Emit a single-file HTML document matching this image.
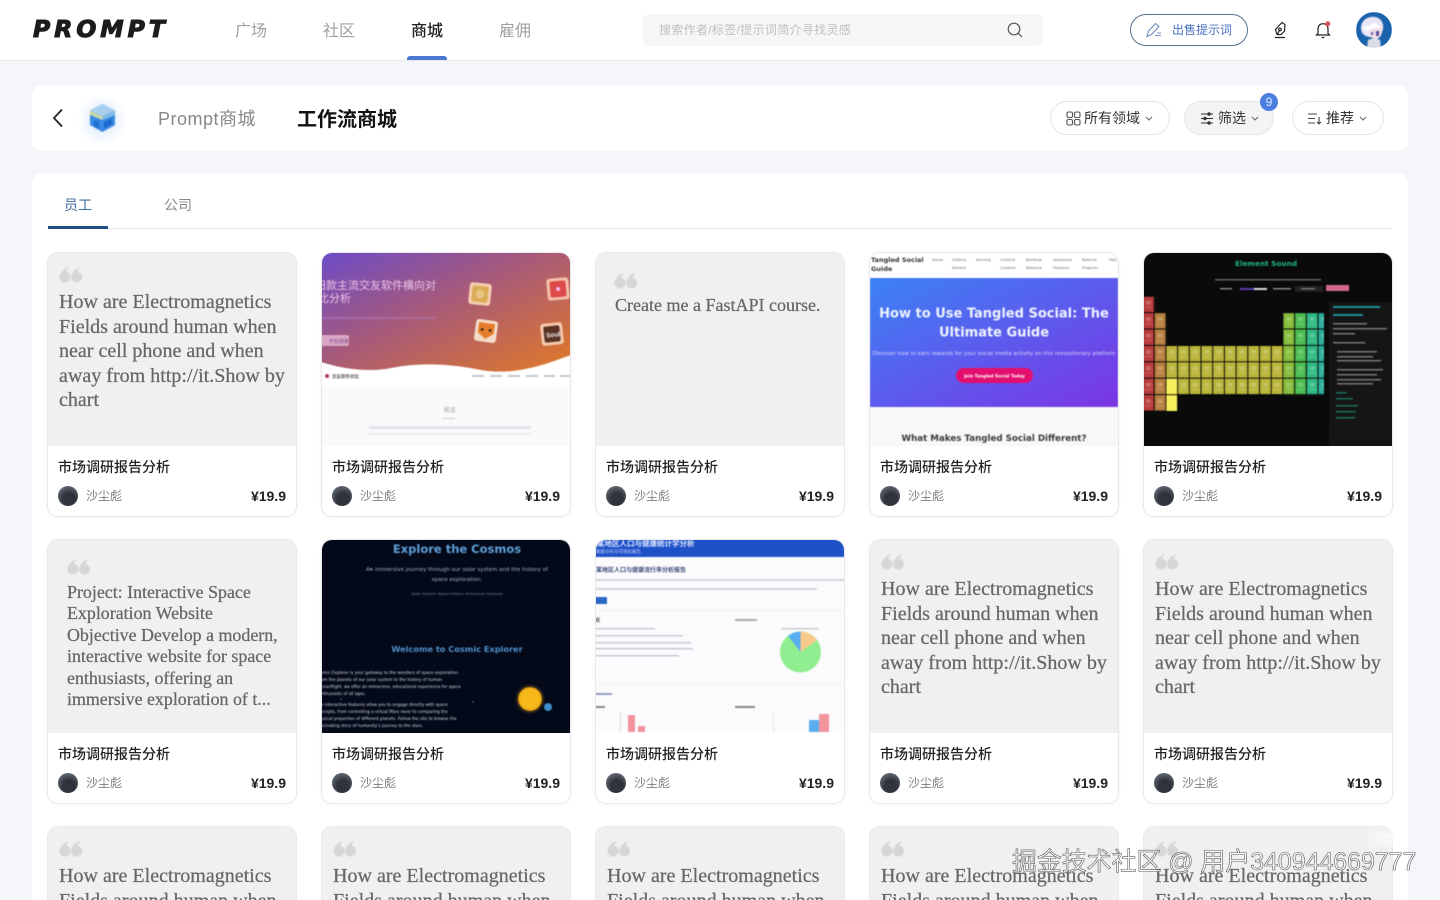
<!DOCTYPE html>
<html lang="zh"><head><meta charset="utf-8"><title>Prompt商城</title>
<style>
*{box-sizing:border-box;margin:0;padding:0}
html,body{width:1440px;height:900px;overflow:hidden;background:#f5f6fa;font-family:"Liberation Sans","Noto Sans CJK SC",sans-serif}
#root{position:relative;width:1440px;height:900px;overflow:hidden;background:#f5f6fa}
.a{position:absolute;white-space:nowrap}
#hd{position:absolute;left:0;top:0;width:1440px;height:61px;background:#fff;border-bottom:1px solid #e9e9ec}
.nav{top:20.500px;font-size:16px;line-height:22px;color:#a0a0a0}
.panel{position:absolute;left:32px;width:1376px;background:#fff;border-radius:10px}
.pill{position:absolute;top:101px;height:34px;border:1px solid #e3e4e8;border-radius:17px;background:#fff;font-size:14px;line-height:33px;color:#333;white-space:nowrap}
.card{position:absolute;width:250px;height:265px;background:#fff;border:1px solid #e9e9ec;border-radius:11px;overflow:hidden;box-shadow:0 1px 3px rgba(0,0,0,.05)}
.r3{height:74px;border-bottom:0;border-radius:11px 11px 0 0;box-shadow:none}
.th{position:absolute;left:-1px;top:-1px;width:250px;height:194px;background:#f0f0f1;overflow:hidden}
.r3 .th{height:75px}
.th svg{position:absolute;left:0;top:0;filter:blur(.5px)}
.q{position:absolute;font-family:"Liberation Serif","Noto Serif CJK SC",serif;color:#676767;-webkit-text-stroke:.25px #676767}
.t{position:absolute;left:10px;top:203.500px;font-size:14px;line-height:20px;font-weight:500;color:#222;white-space:nowrap}
.av{position:absolute;left:10px;top:233px;width:20px;height:20px;border-radius:50%;background:radial-gradient(circle at 55% 65%,#2f333b 0 35%,#5a606c 70%)}
.n{position:absolute;left:38px;top:234px;font-size:12px;line-height:18px;color:#7d7d7d}
.p{position:absolute;right:10px;top:234px;font-size:14px;line-height:18px;font-weight:700;color:#222}
.e{left:12px;top:38px;font-size:20.050px;line-height:24.600px;width:236px}
.r3 .e{height:37px;overflow:hidden}
#wm{left:1012px;top:846px;font-size:24.900px;line-height:32px;color:rgba(255,255,255,.75);-webkit-text-stroke:.6px #5a5a5a}
</style></head><body><div id="root">

<div id="hd"></div>
<div class="a" style="left:33px;top:14px;font-family:'DejaVu Sans',sans-serif;font-size:23.500px;line-height:30px;font-weight:700;font-style:italic;letter-spacing:4px;color:#1c1c1c;-webkit-text-stroke:1.100px #1c1c1c">PROMPT</div>
<div class="a nav" style="left:235px">广场</div>
<div class="a nav" style="left:323px">社区</div>
<div class="a nav" style="left:411px;color:#222;font-weight:500">商城</div>
<div class="a nav" style="left:499px">雇佣</div>
<div class="a" style="left:407px;top:56px;width:40px;height:4px;background:#4a78d0;border-radius:3px 3px 0 0"></div>

<div class="a" style="left:643px;top:14px;width:400px;height:32px;background:#f6f6f7;border-radius:6px"></div>
<div class="a" style="left:659px;top:21px;font-size:12px;line-height:18px;letter-spacing:.32px;color:#c0c0c0">搜索作者/标签/提示词简介寻找灵感</div>
<svg class="a" style="left:1006px;top:21px" width="18" height="18" viewBox="0 0 18 18" fill="none" stroke="#555" stroke-width="1.200"><circle cx="8" cy="8" r="5.800"/><path d="M12.300 12.300L16 16"/></svg>

<div class="a" style="left:1130px;top:14px;width:118px;height:32px;border:1px solid #54708c;border-radius:16px"></div>
<svg class="a" style="left:1145px;top:21px" width="18" height="18" viewBox="0 0 18 18" fill="none" stroke="#6f8fc4" stroke-width="1.100"><path d="M2 15.500L3.500 10 10.500 2.500 14 5.500 6.500 13.500Z"/><path d="M10 14.500h6M12 12h4"/></svg>
<div class="a" style="left:1172px;top:21px;font-size:12px;line-height:18px;color:#4a6fc0">出售提示词</div>
<svg class="a" style="left:1271px;top:20px" width="18" height="20" viewBox="0 0 18 20" fill="none" stroke="#222" stroke-width="1.200"><path d="M6 14.500L4.500 9.500 11 2.500l3 2-.5 6.500-3.500 3.500Z"/><circle cx="9" cy="9.500" r="1.300"/><path d="M8 11l-1.500 3M4 17.500h10"/></svg>
<svg class="a" style="left:1314px;top:20px" width="18" height="20" viewBox="0 0 18 20" fill="none" stroke="#222" stroke-width="1.200"><path d="M4 13.500V9C4 5.800 6 3.700 9 3.700s5 2.100 5 5.300v4.500l1.500 1.500H2.500Z"/><path d="M7.500 17.500h3"/><circle cx="13.700" cy="3.800" r="2.600" fill="#dc4f5e" stroke="none"/></svg>
<svg class="a" style="left:1356px;top:12px" width="36" height="36" viewBox="0 0 36 36"><defs><clipPath id="avc"><circle cx="18" cy="18" r="18"/></clipPath></defs><g clip-path="url(#avc)" style="filter:blur(.4px)"><rect width="36" height="36" fill="#1c63ad"/><path d="M5 16C5 8 12 4 19 5c6 1 9 6 8 12-1 4-2 6-3 8H13C8 24 5 21 5 16Z" fill="#e9e6f6"/><path d="M13 17c2-3 9-4 13-2 1 5-1 10-5 12-4 1-7-2-8-6Z" fill="#f3dfe8"/><path d="M6 14c5 1 9 0 13-4 2 3 5 5 8 6-5-1-11 0-15 3-3-1-5-3-6-5Z" fill="#fff"/><path d="M12 28c3-2 9-2 12 0l1 8H11Z" fill="#dadce8"/><path d="M20 19h3v5h-3Z" fill="#5a4f9a"/><path d="M15 20l2 0v3h-2Z" fill="#6a5aa8"/></g></svg>

<div class="panel" style="top:85px;height:66px"></div>
<svg class="a" style="left:50px;top:107px" width="16" height="22" viewBox="0 0 16 22" fill="none" stroke="#222" stroke-width="1.800"><path d="M12 2.500L4 11l8 8.500"/></svg>
<div class="a" style="left:78px;top:94px;width:48px;height:50px;background:radial-gradient(circle at 50% 52%,rgba(110,170,240,.3),rgba(110,170,240,0) 70%)"></div>
<svg class="a" style="left:89px;top:103px;filter:blur(.5px)" width="27" height="30" viewBox="0 0 27 30"><path d="M13.500 1L26 7.500V22l-12.500 7L1 22V7.500Z" fill="#3a8ae4"/><path d="M13.500 1L26 7.500l-12.500 6L1 7.500Z" fill="#a8d0ee"/><path d="M1 7.500l12.500 6V17L1 12Z" fill="#c4d8a8"/><path d="M26 7.500l-12.500 6V17L26 12Z" fill="#7fbce8"/><path d="M5 17l5 2.200V26l-5-3Z" fill="#1f6fd0"/><path d="M15 19l8-3.500V21l-8 4.500Z" fill="#1a66cc"/></svg>
<div class="a" style="left:158px;top:107px;font-size:18px;line-height:25px;letter-spacing:.5px;color:#888">Prompt商城</div>
<div class="a" style="left:297px;top:106px;font-size:20px;line-height:28px;font-weight:700;color:#111">工作流商城</div>

<div class="pill" style="left:1050px;width:120px">
<svg class="a" style="left:15px;top:9px" width="15" height="15" viewBox="0 0 15 15" fill="none" stroke="#555" stroke-width="1.100"><rect x="1" y="1" width="5.500" height="5.500" rx="1.500"/><rect x="8.500" y="1" width="5.500" height="5.500" rx="1.500"/><rect x="1" y="8.500" width="5.500" height="5.500" rx="1.500"/><rect x="8.500" y="8.500" width="5.500" height="5.500" rx="1.500"/></svg>
<span class="a" style="left:33px;top:0">所有领域</span>
<svg class="a" style="left:94px;top:14px" width="8" height="6" viewBox="0 0 8 6" fill="none" stroke="#666" stroke-width="1"><path d="M1 1l3 3 3-3"/></svg></div>
<div class="pill" style="left:1184px;width:90px;background:#f3f4f6">
<svg class="a" style="left:15px;top:10px" width="14" height="13" viewBox="0 0 14 13" fill="none" stroke="#333" stroke-width="1.100"><path d="M1 2h12M1 6.500h12M1 11h12"/><circle cx="9" cy="2" r="1.200" fill="#333"/><circle cx="5" cy="6.500" r="1.200" fill="#333"/><circle cx="9" cy="11" r="1.200" fill="#333"/></svg>
<span class="a" style="left:33px;top:0">筛选</span>
<svg class="a" style="left:66px;top:14px" width="8" height="6" viewBox="0 0 8 6" fill="none" stroke="#666" stroke-width="1"><path d="M1 1l3 3 3-3"/></svg></div>
<div class="a" style="left:1260px;top:93px;width:18px;height:18px;border-radius:50%;background:#4a7fe0;color:#dfe8ff;font-size:12px;line-height:18px;text-align:center">9</div>
<div class="pill" style="left:1292px;width:92px">
<svg class="a" style="left:14px;top:10px" width="15" height="13" viewBox="0 0 15 13" fill="none" stroke="#444" stroke-width="1.100"><path d="M1 2h9M1 6.500h7M1 11h7M12 5v7M10 10l2 2 2-2"/></svg>
<span class="a" style="left:33px;top:0">推荐</span>
<svg class="a" style="left:66px;top:14px" width="8" height="6" viewBox="0 0 8 6" fill="none" stroke="#666" stroke-width="1"><path d="M1 1l3 3 3-3"/></svg></div>

<div class="panel" style="top:173px;height:727px;border-radius:10px 10px 0 0"></div>
<div class="a" style="left:64px;top:196px;font-size:14px;line-height:18px;color:#3f6c9c">员工</div>
<div class="a" style="left:164px;top:196px;font-size:14px;line-height:18px;color:#888">公司</div>
<div class="a" style="left:48px;top:228px;width:1344px;height:1px;background:#e8e8ea"></div>
<div class="a" style="left:48px;top:226px;width:60px;height:3px;background:#1f4f85"></div>

<!-- ROW 1 -->
<div class="card" style="left:47px;top:252px"><div class="th">
<svg width="24" height="18" viewBox="0 0 24 18" style="left:12px;top:14px"><g fill="#d6d6d7"><circle cx="6" cy="11" r="5.500"/><path d="M1 10C2 5 6 2 10 1 7 4 7 6 8 8Z"/><circle cx="17.500" cy="11" r="5.500"/><path d="M12.500 10c1-5 5-8 9-9-3 3-3 5-2 7Z"/></g></svg>
<div class="q e">How are Electromagnetics<br>Fields around human when<br>near cell phone and when<br>away from http://it.Show by<br>chart</div></div>
<div class="t">市场调研报告分析</div><div class="av"></div><div class="n">沙尘彪</div><div class="p">¥19.9</div></div>

<div class="card" style="left:321px;top:252px"><div class="th" style="background:#f9fafb">
<svg width="250" height="194" viewBox="0 0 250 194">
<defs><linearGradient id="g2" x1="0" y1="0" x2="1" y2="1"><stop offset="0" stop-color="#6c4cc8"/><stop offset=".45" stop-color="#a85a78"/><stop offset="1" stop-color="#e47b22"/></linearGradient></defs>
<rect width="250" height="125" fill="url(#g2)"/>
<path d="M0 110C25 118 50 120 70 116 100 110 130 112 160 118 195 124 225 112 250 103V135H0Z" fill="#fff"/>
<text x="-6" y="37" font-size="11" fill="#eec6e8">旧款主流交友软件横向对</text>
<text x="-3" y="50" font-size="11" fill="#eec6e8">比分析</text>
<rect x="0" y="65" width="115" height="2" fill="#b98ad0" opacity=".4"/>
<rect x="0" y="83" width="28" height="11" rx="2" fill="#e4b6d0" opacity=".85"/>
<text x="8" y="91" font-size="5" fill="#8a4a90">开始探索</text>
<g transform="rotate(6 159 42)"><rect x="148" y="31" width="22" height="22" rx="3" fill="#f4cdb2"/><rect x="151" y="34" width="16" height="16" rx="2" fill="#d9ab52"/><circle cx="159" cy="42" r="4.500" fill="#e7c484"/></g>
<g transform="rotate(-5 237 37)"><rect x="226" y="26" width="22" height="22" rx="3" fill="#f4bfa8"/><rect x="229" y="29" width="16" height="16" rx="2" fill="#dc4a4a"/><circle cx="237" cy="37" r="2" fill="#fbe"/></g>
<g transform="rotate(8 165 79)"><rect x="154" y="68" width="22" height="22" rx="3" fill="#f4dcc8"/><path d="M157 71h16v10l-8 6-8-6Z" fill="#e57c2a"/><circle cx="161" cy="78" r="1.300" fill="#222"/><circle cx="169" cy="78" r="1.300" fill="#222"/></g>
<g transform="rotate(-6 231 82)"><rect x="220" y="71" width="22" height="22" rx="3" fill="#f4c8ac"/><rect x="223" y="74" width="16" height="16" rx="2" fill="#5a3226"/><text x="225" y="85" font-size="6.500" font-weight="700" fill="#eee">Soul</text></g>
<circle cx="6" cy="124" r="2" fill="#b5344a"/><text x="11" y="126" font-size="4.500" fill="#555" font-weight="700">交友软件对比</text>
<g fill="#c4c6ca"><rect x="151" y="123" width="12" height="2"/><rect x="169" y="123" width="12" height="2"/><rect x="187" y="123" width="12" height="2"/><rect x="205" y="123" width="12" height="2"/><rect x="223" y="123" width="11" height="2"/><rect x="239" y="123" width="11" height="2"/></g>
<text x="123" y="160" font-size="6" fill="#999">前言</text><rect x="121" y="166" width="13" height="1" fill="#ccc"/>
<rect x="48" y="174" width="162" height="3" fill="#e2e4e7"/><rect x="48" y="181" width="162" height="2" fill="#e8e9ec"/>
</svg></div>
<div class="t">市场调研报告分析</div><div class="av"></div><div class="n">沙尘彪</div><div class="p">¥19.9</div></div>

<div class="card" style="left:595px;top:252px"><div class="th">
<svg width="24" height="18" viewBox="0 0 24 18" style="left:19px;top:20px"><g fill="#d6d6d7"><circle cx="6" cy="11" r="5.500"/><path d="M1 10C2 5 6 2 10 1 7 4 7 6 8 8Z"/><circle cx="17.500" cy="11" r="5.500"/><path d="M12.500 10c1-5 5-8 9-9-3 3-3 5-2 7Z"/></g></svg>
<div class="q" style="left:20px;top:42px;font-size:18px;line-height:22px;white-space:nowrap">Create me a FastAPI course.</div></div>
<div class="t">市场调研报告分析</div><div class="av"></div><div class="n">沙尘彪</div><div class="p">¥19.9</div></div>

<div class="card" style="left:869px;top:252px"><div class="th" style="background:#f8f8f9">
<svg width="250" height="194" viewBox="0 0 250 194" font-family="DejaVu Sans, sans-serif">
<defs><linearGradient id="g4" x1="0" y1="0" x2="1" y2="1"><stop offset="0" stop-color="#3b82f6"/><stop offset="1" stop-color="#7c35e4"/></linearGradient></defs>
<rect width="250" height="26" fill="#fff"/>
<text x="2" y="10" font-size="6.500" font-weight="700" fill="#333">Tangled Social</text><text x="2" y="19" font-size="6.500" font-weight="700" fill="#333">Guide</text>
<g font-size="3.800" fill="#666"><text x="63" y="9">Home</text><text x="83" y="9">Getting</text><text x="83" y="17">Started</text><text x="107" y="9">Earning</text><text x="131" y="9">Content</text><text x="131" y="17">Creation</text><text x="157" y="9">Building</text><text x="157" y="17">Network</text><text x="184" y="9">Advanced</text><text x="184" y="17">Features</text><text x="213" y="9">Referral</text><text x="213" y="17">Program</text><text x="240" y="9">FAQ</text></g>
<rect x="1" y="26" width="248" height="129" fill="url(#g4)"/>
<text x="125" y="65.500" text-anchor="middle" font-size="13" font-weight="700" fill="#eef3ff">How to Use Tangled Social: The</text>
<text x="125" y="84.500" text-anchor="middle" font-size="13" font-weight="700" fill="#eef3ff">Ultimate Guide</text>
<text x="125" y="103" text-anchor="middle" font-size="5.400" fill="#d8d8ff">Discover how to earn rewards for your social media activity on this revolutionary platform</text>
<rect x="87" y="116" width="77" height="15" rx="7.500" fill="#e30f6e"/>
<text x="125.500" y="125.500" text-anchor="middle" font-size="4.300" font-weight="700" fill="#fff">Join Tangled Social Today</text>
<text x="125" y="189" text-anchor="middle" font-size="8.700" font-weight="700" fill="#3a3a3a">What Makes Tangled Social Different?</text>
</svg></div>
<div class="t">市场调研报告分析</div><div class="av"></div><div class="n">沙尘彪</div><div class="p">¥19.9</div></div>

<div class="card" style="left:1143px;top:252px"><div class="th" style="background:#0a0a0a">
<svg width="250" height="194" viewBox="0 0 250 194" font-family="DejaVu Sans, sans-serif">
<defs><pattern id="gr" x="0" y="44.700" width="11.700" height="16.400" patternUnits="userSpaceOnUse"><rect x="10.700" width="1" height="16.400" fill="#0a0a0a"/><rect y="15.400" width="11.700" height="1" fill="#0a0a0a"/><rect x="3" y="4" width="5" height="4" fill="#fff" opacity=".22"/><rect x="2" y="10" width="7" height="1.500" fill="#fff" opacity=".14"/></pattern></defs>
<text x="123" y="14" text-anchor="middle" font-size="7.300" font-weight="700" fill="#1fb486">Element Sound</text>
<rect x="72" y="27" width="106" height="1.500" fill="#666"/>
<rect x="77" y="36" width="12" height="1.500" fill="#888"/><rect x="97" y="36" width="14" height="2" fill="#5a3ab0"/><rect x="111" y="36" width="13" height="2" fill="#ddd"/><rect x="130" y="36" width="18" height="1.500" fill="#888"/><rect x="152" y="34" width="28" height="6" fill="#222"/><rect x="158" y="36" width="14" height="1.500" fill="#777"/><rect x="183" y="33" width="23" height="6" fill="#d06a86"/>
<rect x="0" y="44.700" width="11.700" height="114.800" fill="#b83c3c"/>
<rect x="11.700" y="61.100" width="11.700" height="98.400" fill="#b8803f"/>
<rect x="23.400" y="94" width="117" height="49" fill="#b9b43a"/>
<rect x="140.400" y="61.100" width="11.700" height="82" fill="#84bd3c"/>
<rect x="152.100" y="61.100" width="11.700" height="82" fill="#4cbc50"/>
<rect x="163.800" y="61.100" width="11.700" height="82" fill="#2fb884"/>
<rect x="175.500" y="61.100" width="5.500" height="82" fill="#2aaf9c"/>
<rect x="0" y="44.700" width="11.700" height="114.800" fill="url(#gr)"/>
<rect x="11.700" y="61.100" width="11.700" height="98.400" fill="url(#gr)"/>
<rect x="23.400" y="94" width="117" height="49" fill="url(#gr)"/>
<rect x="140.400" y="61.100" width="40.600" height="82" fill="url(#gr)"/>
<rect x="23.400" y="126.800" width="10.700" height="15.400" fill="#f7f05c"/><rect x="23.400" y="143.200" width="10.700" height="15.800" fill="#f7f05c"/>
<rect x="186" y="50" width="64" height="144" fill="#151515"/>
<g fill="#1e8f9a"><rect x="190" y="54" width="47" height="2"/><rect x="190" y="62" width="30" height="2"/></g>
<g fill="#777"><rect x="190" y="71" width="34" height="1.500"/><rect x="190" y="76" width="54" height="1.500"/><rect x="190" y="81" width="22" height="1.500"/><rect x="190" y="90" width="32" height="1.500"/><rect x="194" y="99" width="40" height="1.500"/><rect x="194" y="104" width="36" height="1.500"/><rect x="194" y="108" width="44" height="1.500"/><rect x="194" y="117" width="46" height="1.500"/><rect x="194" y="122" width="40" height="1.500"/><rect x="194" y="127" width="44" height="1.500"/><rect x="194" y="131" width="36" height="1.500"/></g>
<g fill="#176f5c"><rect x="193" y="140" width="11" height="1.500"/><rect x="193" y="146" width="17" height="1.500"/><rect x="193" y="153" width="22" height="1.500"/><rect x="193" y="159" width="20" height="1.500"/><rect x="193" y="165" width="19" height="1.500"/></g>
</svg></div>
<div class="t">市场调研报告分析</div><div class="av"></div><div class="n">沙尘彪</div><div class="p">¥19.9</div></div>

<!-- ROW 2 -->
<div class="card" style="left:47px;top:539px"><div class="th">
<svg width="24" height="18" viewBox="0 0 24 18" style="left:20px;top:19px"><g fill="#d6d6d7"><circle cx="6" cy="11" r="5.500"/><path d="M1 10C2 5 6 2 10 1 7 4 7 6 8 8Z"/><circle cx="17.500" cy="11" r="5.500"/><path d="M12.500 10c1-5 5-8 9-9-3 3-3 5-2 7Z"/></g></svg>
<div class="q" style="left:20px;top:43px;font-size:17.900px;line-height:21.400px;white-space:nowrap">Project: Interactive Space<br>Exploration Website<br>Objective Develop a modern,<br>interactive website for space<br>enthusiasts, offering an<br>immersive exploration of t...</div></div>
<div class="t">市场调研报告分析</div><div class="av"></div><div class="n">沙尘彪</div><div class="p">¥19.9</div></div>

<div class="card" style="left:321px;top:539px"><div class="th" style="background:#04091a">
<svg width="250" height="194" viewBox="0 0 250 194" font-family="DejaVu Sans, sans-serif">
<defs><radialGradient id="sun"><stop offset=".8" stop-color="#f7b81a"/><stop offset="1" stop-color="#e09a10"/></radialGradient></defs>
<text x="136" y="14" text-anchor="middle" font-size="11.500" font-weight="700" fill="#5f9fd8">Explore the Cosmos</text>
<text x="136" y="32" text-anchor="middle" font-size="5.500" fill="#a8b0c0">An immersive journey through our solar system and the history of</text>
<text x="136" y="42" text-anchor="middle" font-size="5.500" fill="#a8b0c0">space exploration.</text>
<text x="136" y="56" text-anchor="middle" font-size="3.800" fill="#7a8496">Solar System   Space History   Immersive Features</text>
<text x="136" y="113" text-anchor="middle" font-size="8.200" font-weight="700" fill="#4f90c8">Welcome to Cosmic Explorer</text>
<g font-size="4.100" fill="#d0d4dc"><text x="0" y="135">smic Explorer is your gateway to the wonders of space exploration.</text><text x="0" y="142">om the planets of our solar system to the history of human</text><text x="0" y="149">ceanflight, we offer an immersive, educational experience for space</text><text x="0" y="156">nthusiasts of all ages.</text><text x="0" y="167">e interactive features allow you to engage directly with space</text><text x="0" y="174">ncepts, from controlling a virtual Mars rover to comparing the</text><text x="0" y="181">ysical properties of different planets. Follow the site to browse the</text><text x="0" y="188">scinating story of humanity's journey to the stars.</text></g>
<circle cx="209" cy="160" r="14.500" fill="#f7b81a" opacity=".15"/><circle cx="209" cy="160" r="12" fill="url(#sun)"/>
<circle cx="227" cy="168" r="4" fill="#3d8fc8"/>
<circle cx="50" cy="30" r=".5" fill="#fff"/><circle cx="152" cy="163" r=".6" fill="#aaa"/><circle cx="20" cy="160" r=".5" fill="#fff"/>
</svg></div>
<div class="t">市场调研报告分析</div><div class="av"></div><div class="n">沙尘彪</div><div class="p">¥19.9</div></div>

<div class="card" style="left:595px;top:539px"><div class="th" style="background:#fbfbfd">
<svg width="250" height="194" viewBox="0 0 250 194">
<rect width="250" height="18" fill="#1e50c8"/>
<text x="2" y="7" font-size="7.500" font-weight="700" fill="#dfe8ff">某地区人口与健康统计学分析</text>
<text x="1" y="14" font-size="4.500" fill="#c8d6ff">数据分析与可视化报告</text>
<text x="1" y="33" font-size="6" font-weight="700" fill="#3a4a7a">某地区人口与健康流行率分析报告</text>
<rect y="40" width="250" height="2" fill="#b4b6c0" opacity=".55"/><rect y="49" width="222" height="2" fill="#b4b6c0" opacity=".55"/>
<rect y="58" width="12" height="7" rx="1" fill="#2a66c8"/>
<rect y="71" width="250" height="1" fill="#f0f0f2"/>
<text x="0" y="83" font-size="5" font-weight="700" fill="#666">概</text>
<g fill="#b4b6c0" opacity=".7"><rect y="89" width="60" height="1.500"/><rect y="96" width="88" height="1.500"/><rect y="103" width="96" height="1.500"/><rect y="109" width="98" height="1.500"/><rect y="116" width="84" height="1.500"/></g>
<rect x="140" y="80" width="22" height="2" fill="#aaa"/><rect x="186" y="89" width="38" height="1.500" fill="#ccc"/>
<circle cx="205.500" cy="113" r="20.500" fill="#90ee90"/>
<path d="M205.500 113V92.500A20.500 20.500 0 0 1 222 101Z" fill="#f7c98c"/>
<path d="M205.500 113L193 97A20.500 20.500 0 0 1 205.500 92.500Z" fill="#5aaef0"/>
<rect y="145" width="250" height="1" fill="#f0f0f2"/>
<rect y="154" width="17" height="2" fill="#6a76a8" opacity=".7"/>
<rect y="167" width="10" height="2" fill="#888"/><rect x="140" y="167" width="20" height="2" fill="#888"/>
<rect x="25" y="172" width="1" height="21" fill="#ddd"/><rect x="33" y="176" width="7" height="17" fill="#f2949e"/><rect x="43" y="187" width="7" height="6" fill="#f2949e"/>
<rect x="178" y="172" width="1" height="21" fill="#e6e6e6"/><rect x="214" y="181" width="10" height="12" fill="#5aaef0"/><rect x="224" y="175" width="10" height="18" fill="#f2949e"/>
</svg></div>
<div class="t">市场调研报告分析</div><div class="av"></div><div class="n">沙尘彪</div><div class="p">¥19.9</div></div>

<div class="card" style="left:869px;top:539px"><div class="th">
<svg width="24" height="18" viewBox="0 0 24 18" style="left:12px;top:14px"><g fill="#d6d6d7"><circle cx="6" cy="11" r="5.500"/><path d="M1 10C2 5 6 2 10 1 7 4 7 6 8 8Z"/><circle cx="17.500" cy="11" r="5.500"/><path d="M12.500 10c1-5 5-8 9-9-3 3-3 5-2 7Z"/></g></svg>
<div class="q e">How are Electromagnetics<br>Fields around human when<br>near cell phone and when<br>away from http://it.Show by<br>chart</div></div>
<div class="t">市场调研报告分析</div><div class="av"></div><div class="n">沙尘彪</div><div class="p">¥19.9</div></div>

<div class="card" style="left:1143px;top:539px"><div class="th">
<svg width="24" height="18" viewBox="0 0 24 18" style="left:12px;top:14px"><g fill="#d6d6d7"><circle cx="6" cy="11" r="5.500"/><path d="M1 10C2 5 6 2 10 1 7 4 7 6 8 8Z"/><circle cx="17.500" cy="11" r="5.500"/><path d="M12.500 10c1-5 5-8 9-9-3 3-3 5-2 7Z"/></g></svg>
<div class="q e">How are Electromagnetics<br>Fields around human when<br>near cell phone and when<br>away from http://it.Show by<br>chart</div></div>
<div class="t">市场调研报告分析</div><div class="av"></div><div class="n">沙尘彪</div><div class="p">¥19.9</div></div>

<!-- ROW 3 -->
<div class="card r3" style="left:47px;top:826px"><div class="th">
<svg width="24" height="18" viewBox="0 0 24 18" style="left:12px;top:14px"><g fill="#d6d6d7"><circle cx="6" cy="11" r="5.500"/><path d="M1 10C2 5 6 2 10 1 7 4 7 6 8 8Z"/><circle cx="17.500" cy="11" r="5.500"/><path d="M12.500 10c1-5 5-8 9-9-3 3-3 5-2 7Z"/></g></svg>
<div class="q e">How are Electromagnetics<br>Fields around human when</div></div></div>
<div class="card r3" style="left:321px;top:826px"><div class="th">
<svg width="24" height="18" viewBox="0 0 24 18" style="left:12px;top:14px"><g fill="#d6d6d7"><circle cx="6" cy="11" r="5.500"/><path d="M1 10C2 5 6 2 10 1 7 4 7 6 8 8Z"/><circle cx="17.500" cy="11" r="5.500"/><path d="M12.500 10c1-5 5-8 9-9-3 3-3 5-2 7Z"/></g></svg>
<div class="q e">How are Electromagnetics<br>Fields around human when</div></div></div>
<div class="card r3" style="left:595px;top:826px"><div class="th">
<svg width="24" height="18" viewBox="0 0 24 18" style="left:12px;top:14px"><g fill="#d6d6d7"><circle cx="6" cy="11" r="5.500"/><path d="M1 10C2 5 6 2 10 1 7 4 7 6 8 8Z"/><circle cx="17.500" cy="11" r="5.500"/><path d="M12.500 10c1-5 5-8 9-9-3 3-3 5-2 7Z"/></g></svg>
<div class="q e">How are Electromagnetics<br>Fields around human when</div></div></div>
<div class="card r3" style="left:869px;top:826px"><div class="th">
<svg width="24" height="18" viewBox="0 0 24 18" style="left:12px;top:14px"><g fill="#d6d6d7"><circle cx="6" cy="11" r="5.500"/><path d="M1 10C2 5 6 2 10 1 7 4 7 6 8 8Z"/><circle cx="17.500" cy="11" r="5.500"/><path d="M12.500 10c1-5 5-8 9-9-3 3-3 5-2 7Z"/></g></svg>
<div class="q e">How are Electromagnetics<br>Fields around human when</div></div></div>
<div class="card r3" style="left:1143px;top:826px"><div class="th">
<svg width="24" height="18" viewBox="0 0 24 18" style="left:12px;top:14px"><g fill="#d6d6d7"><circle cx="6" cy="11" r="5.500"/><path d="M1 10C2 5 6 2 10 1 7 4 7 6 8 8Z"/><circle cx="17.500" cy="11" r="5.500"/><path d="M12.500 10c1-5 5-8 9-9-3 3-3 5-2 7Z"/></g></svg>
<div class="q e">How are Electromagnetics<br>Fields around human when</div></div></div>

<div class="a" style="left:1366px;top:831px;width:44px;height:17px;border-radius:9px;background:rgba(255,255,255,.3);color:rgba(255,255,255,.85);font-size:11px;line-height:17px;text-align:center">小助手</div>
<div class="a" id="wm">掘金技术社区 @ 用户340944669777</div>
</div></body></html>
